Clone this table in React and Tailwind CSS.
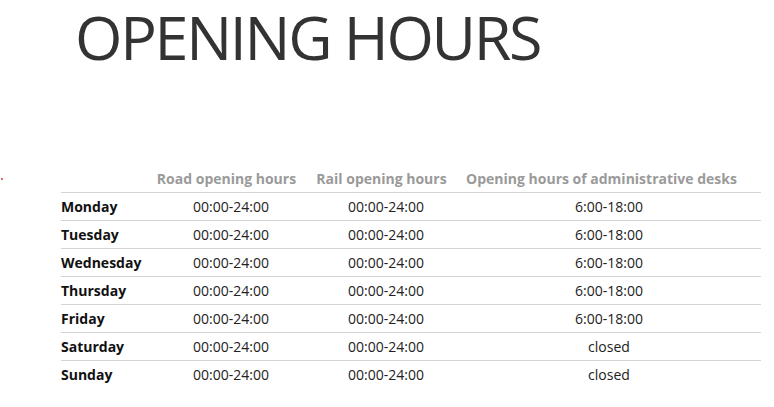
import React from "react";

const days = [
  { day: "Monday", road: "00:00-24:00", rail: "00:00-24:00", desk: "6:00-18:00" },
  { day: "Tuesday", road: "00:00-24:00", rail: "00:00-24:00", desk: "6:00-18:00" },
  { day: "Wednesday", road: "00:00-24:00", rail: "00:00-24:00", desk: "6:00-18:00" },
  { day: "Thursday", road: "00:00-24:00", rail: "00:00-24:00", desk: "6:00-18:00" },
  { day: "Friday", road: "00:00-24:00", rail: "00:00-24:00", desk: "6:00-18:00" },
  { day: "Saturday", road: "00:00-24:00", rail: "00:00-24:00", desk: "closed" },
  { day: "Sunday", road: "00:00-24:00", rail: "00:00-24:00", desk: "closed" },
];

const App = () => {
  return (
    <div className="w-[774px] h-[407px] bg-white overflow-hidden font-['Open_Sans',sans-serif] text-[#222]">
      <h1 className="pl-[75px] text-[61px] leading-[74px] font-normal text-[#333] tracking-[-2.3px] whitespace-nowrap">
        OPENING HOURS
      </h1>

      <div className="flex mt-[90px]">
        {/* stray red pixel at the left edge */}
        <div className="w-[61px] pt-[14px] pl-[1px]">
          <div className="w-[2px] h-[2px] bg-[#c0392b] opacity-70" />
        </div>

        <table className="table-fixed w-[700px] border-collapse text-[14px]">
          <colgroup>
            <col className="w-[86px]" />
            <col className="w-[168px]" />
            <col className="w-[142px]" />
            <col className="w-[304px]" />
          </colgroup>
          <thead>
            <tr className="h-[28px] border-b border-[#d4d4d4] text-[#9a9a9a] font-bold">
              <th className="pt-[2px]" />
              <th className="text-center pt-[2px] pr-[9px] font-bold">Road opening hours</th>
              <th className="text-center pt-[2px] pr-[9px] font-bold">Rail opening hours</th>
              <th className="text-center pt-[2px] pr-[15px] font-bold">Opening hours of administrative desks</th>
            </tr>
          </thead>
          <tbody>
            {days.map((d, i) => (
              <tr
                key={d.day}
                className={`h-[28px] ${i < days.length - 1 ? "border-b border-[#d4d4d4]" : ""}`}
              >
                <td className="font-bold text-[#111] whitespace-nowrap">{d.day}</td>
                <td className="text-center">{d.road}</td>
                <td className="text-center">{d.rail}</td>
                <td className="text-center">{d.desk}</td>
              </tr>
            ))}
          </tbody>
        </table>
      </div>
    </div>
  );
};

export default App;
